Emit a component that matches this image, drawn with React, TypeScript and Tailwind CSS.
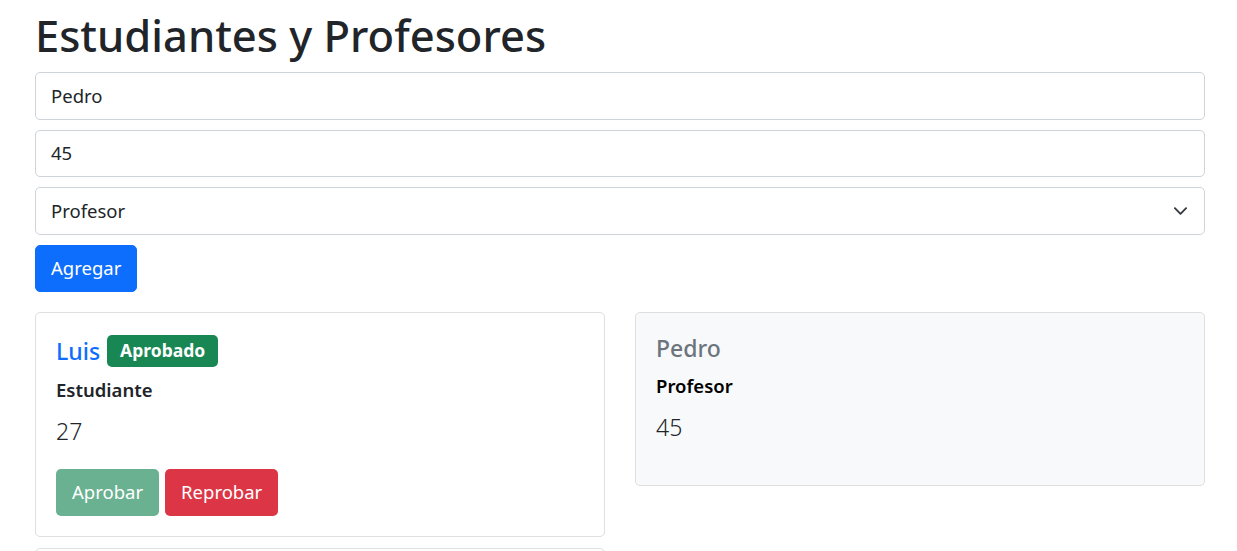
import React from "react";

function Chevron() {
  return (
    <svg width="15" height="15" viewBox="0 0 16 16" className="absolute right-[16px] top-1/2 -translate-y-1/2 pointer-events-none">
      <path d="m2 5 6 6 6-6" fill="none" stroke="#343a40" strokeWidth="2" strokeLinecap="round" strokeLinejoin="round" />
    </svg>
  );
}

export default function App() {
  return (
    <div className="bg-white min-h-[551px] text-[#212529] [font-family:'Noto_Sans',sans-serif]">
      <div className="w-[1170px] ml-[35px]">
        <h1 className="text-[43.5px] leading-[55px] font-medium pt-[8px] mb-[9px]">Estudiantes y Profesores</h1>
        <div className="flex flex-col gap-[10px]">
          <div className="h-[47.5px] border border-[#ced4da] rounded-[5px] px-[15px] flex items-center text-[18.5px]">Pedro</div>
          <div className="h-[47.5px] border border-[#ced4da] rounded-[5px] px-[15px] flex items-center text-[18.5px]">45</div>
          <div className="relative h-[47.5px] border border-[#ced4da] rounded-[5px] px-[15px] flex items-center text-[18.5px]">
            Profesor
            <Chevron />
          </div>
          <div>
            <button className="h-[47.5px] px-[15px] bg-[#0d6efd] text-white text-[18.5px] rounded-[5px] border border-[#0d6efd]">Agregar</button>
          </div>
        </div>
        <div className="grid grid-cols-2 gap-[30px] mt-[20px]">
          <div className="flex flex-col gap-[11px]">
            <div className="border border-[#dfdfdf] rounded-[5px] p-[20px]">
              <div className="flex items-center h-[36px] mb-[9px]">
                <span className="text-[23px] leading-[30px] text-[#0d6efd] font-medium">Luis</span>
                <span className="ml-[7px] bg-[#198754] text-white font-bold text-[17.5px] leading-[19px] px-[13px] pt-[6px] pb-[6.5px] rounded-[5px]">Aprobado</span>
              </div>
              <div className="text-[18.5px] leading-[24px] font-semibold mb-[11px]">Estudiante</div>
              <div className="text-[23px] leading-[37.5px] font-light mb-[18px]">27</div>
              <div className="flex gap-[6px]">
                <button className="h-[47.5px] px-[16px] bg-[#69b190] text-white text-[18.5px] rounded-[5px]">Aprobar</button>
                <button className="h-[47.5px] px-[16px] bg-[#dc3545] text-white text-[18.5px] rounded-[5px]">Reprobar</button>
              </div>
            </div>
            <div className="border border-[#dfdfdf] rounded-[5px] p-[20px] h-[225px]"></div>
          </div>
          <div>
            <div className="border border-[#dfdfdf] rounded-[5px] p-[20px] bg-[#f8f9fa]">
              <div className="text-[23px] leading-[30px] text-[#6c757d] font-medium mb-[11px]">Pedro</div>
              <div className="text-[18.5px] leading-[24px] font-semibold text-black mb-[11px]">Profesor</div>
              <div className="text-[23px] leading-[37.5px] font-light mb-[18px]">45</div>
            </div>
          </div>
        </div>
      </div>
    </div>
  );
}
